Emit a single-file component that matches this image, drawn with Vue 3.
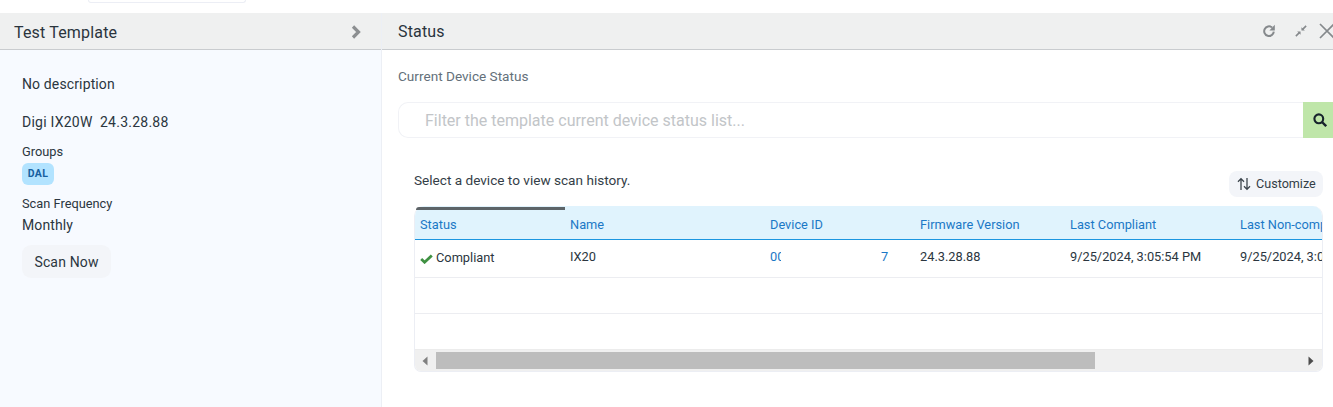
<script setup>
const columns = [
  { label: 'Status', width: 150 },
  { label: 'Name', width: 200 },
  { label: 'Device ID', width: 150 },
  { label: 'Firmware Version', width: 150 },
  { label: 'Last Compliant', width: 170 },
  { label: 'Last Non-compliant', width: 170 }
]
</script>

<template>
  <div class="page">
    <div class="topstrip"><div class="topinput"></div></div>
    <div class="panels">
      <aside class="left">
        <header class="head lefthead">
          <span class="title">Test Template</span>
          <svg class="chev" width="12" height="14" viewBox="0 0 12 14"><path d="M3 1.5 8.5 7 3 12.5" fill="none" stroke="#8c8f91" stroke-width="3.2"/></svg>
        </header>
        <div class="leftbody">
          <p class="line desc">No description</p>
          <p class="line model">Digi IX20W&nbsp; 24.3.28.88</p>
          <div class="small groups">Groups</div>
          <span class="badge">DAL</span>
          <div class="small freq">Scan Frequency</div>
          <div class="monthly">Monthly</div>
          <button class="scan">Scan Now</button>
        </div>
      </aside>
      <main class="right">
        <header class="head righthead">
          <span class="title">Status</span>
          <div class="tools">
            <svg class="refresh" width="14" height="14" viewBox="0 0 14 14"><path d="M11.8 7.6A4.8 4.8 0 1 1 10 3.4" fill="none" stroke="#85898c" stroke-width="2"/><path d="M12.8 .8v5.6H7.4z" fill="#85898c"/></svg>
            <svg class="shrink" width="12" height="12" viewBox="0 0 14 14"><path d="M13 1 8.6 5.4M1 13l4.4-4.4" stroke="#85898c" stroke-width="1.8"/><path d="M7.5 2.5v4h4zM2.5 7.5h4v4z" fill="#85898c"/></svg>
            <svg class="close" width="16" height="16" viewBox="0 0 16 16"><path d="M1 1 15 15M15 1 1 15" stroke="#85898c" stroke-width="1.7"/></svg>
          </div>
        </header>
        <div class="rightbody">
          <div class="section">Current Device Status</div>
          <div class="filter">
            <div class="filterbox">Filter the template current device status list...</div>
            <div class="searchbtn">
              <svg width="14" height="14" viewBox="0 0 14 14"><circle cx="5.8" cy="5.8" r="4.4" fill="none" stroke="#17232c" stroke-width="2.1"/><path d="m9 9 4.2 4.2" stroke="#17232c" stroke-width="2.4"/></svg>
            </div>
          </div>
          <div class="toolbar">
            <span class="hint">Select a device to view scan history.</span>
            <button class="customize">
              <svg width="14" height="14" viewBox="0 0 14 14"><path d="M4 13V2M1 4.8 4 1.6l3 3.2M10 1v11M7 9.2l3 3.2 3-3.2" fill="none" stroke="#3b444b" stroke-width="1.3"/></svg>
              <span class="customlabel">Customize</span>
            </button>
          </div>
          <div class="tablewrap">
            <div class="resizebar"></div>
            <div class="tableclip">
              <div class="row headrow">
                <div v-for="c in columns" :key="c.label" class="cell" :style="{ width: c.width + 'px' }">{{ c.label }}</div>
              </div>
              <div class="row datarow first">
                <div class="cell status" style="width:150px">
                  <svg width="13" height="10" viewBox="0 0 13 10"><path d="M1.2 5 4.6 8.2 11.8 1.4" fill="none" stroke="#3f9142" stroke-width="2.8"/></svg>
                  Compliant
                </div>
                <div class="cell" style="width:200px">IX20</div>
                <div class="cell link" style="width:150px">
                  <span class="clip">00</span><span class="tail">7</span>
                </div>
                <div class="cell" style="width:150px">24.3.28.88</div>
                <div class="cell" style="width:170px">9/25/2024, 3:05:54 PM</div>
                <div class="cell" style="width:170px">9/25/2024, 3:05:54 PM</div>
              </div>
              <div class="row datarow second"></div>
              <div class="scrollbar">
                <svg class="arrow aleft" width="6" height="10" viewBox="0 0 6 10"><path d="M5.5 .5v9L.5 5z" fill="#808080"/></svg>
                <div class="thumb"></div>
                <svg class="arrow aright" width="6" height="10" viewBox="0 0 6 10"><path d="M.5 .5v9L5.5 5z" fill="#4d4d4d"/></svg>
              </div>
            </div>
          </div>
        </div>
      </main>
    </div>
  </div>
</template>

<style>
html, body { margin: 0; background: #fff; }
</style>

<style scoped>
.page {
  width: 1333px;
  height: 407px;
  overflow: hidden;
  font-family: Roboto, "Liberation Sans", sans-serif;
  color: #2b3640;
  background: #fff;
}
.topstrip { height: 13px; padding-left: 88px; }
.topinput {
  width: 156px;
  height: 2px;
  border: 1px solid #eceef5;
  border-top: 0;
  border-radius: 0 0 6px 6px;
}
.panels { display: flex; height: 394px; }
.left {
  width: 381px;
  flex: none;
  background: #f7faff;
  border-right: 1px solid #eceff5;
}
.right { flex: 1; min-width: 0; }
.head {
  height: 36px;
  background: #eff0f0;
  border-bottom: 1px solid #c9cccf;
  display: flex;
  align-items: center;
}
.lefthead { padding: 2px 19px 0 14px; height: 34px; justify-content: space-between; }
.righthead { padding: 0 0 0 16px; justify-content: space-between; }
.title { font-size: 16px; letter-spacing: 0.17px; color: #2a343d; }
.tools { display: flex; align-items: center; }
.refresh { margin-top: -1px; margin-right: 1px; }
.shrink { margin-left: 18px; }
.close { margin-left: 12px; margin-right: -2px; }
.leftbody { padding: 26px 22px 0; }
.line { margin: 0; font-size: 14px; line-height: 17px; }
.desc { letter-spacing: 0.13px; }
.model { margin-top: 20px; letter-spacing: 0.24px; position: relative; top: 1px; }
.small { font-size: 12.8px; line-height: 14px; }
.groups { margin-top: 15px; }
.badge {
  display: block;
  width: 32px;
  height: 22px;
  margin-top: 4px;
  border-radius: 6px;
  background: #b2e3ff;
  color: #17609f;
  font-size: 10.5px;
  font-weight: 700;
  letter-spacing: 0.4px;
  line-height: 22px;
  text-align: center;
}
.freq { margin-top: 12px; }
.monthly { margin-top: 6px; font-size: 14px; line-height: 16px; letter-spacing: 0.1px; }
.scan {
  display: block;
  width: 89px;
  height: 33px;
  margin-top: 12px;
  padding: 0;
  border: 0;
  border-radius: 9px;
  background: #f3f5f9;
  color: #2b3640;
  font: 14px Roboto, sans-serif;
  letter-spacing: 0.15px;
}
.rightbody { padding: 18px 0 0 16px; }
.section { font-size: 13.6px; line-height: 17px; color: #64707a; }
.filter { display: flex; height: 36px; margin-top: 17px; }
.filterbox {
  flex: 1;
  box-sizing: border-box;
  padding-left: 26px;
  border: 1px solid #f1f2f6;
  border-right: 0;
  border-radius: 10px 0 0 10px;
  font-size: 16px;
  line-height: 35px;
  color: #c2c5c8;
}
.searchbtn {
  width: 30px;
  box-sizing: border-box;
  padding-left: 4px;
  background: #bfe6a9;
  display: flex;
  align-items: center;
  justify-content: center;
}
.toolbar {
  display: flex;
  justify-content: space-between;
  align-items: center;
  width: 909px;
  margin: 33px 0 0 16px;
  height: 26px;
}
.hint { font-size: 13.6px; color: #343e47; position: relative; top: -4px; }
.customize {
  display: flex;
  align-items: center;
  gap: 5px;
  width: 94px;
  height: 26px;
  padding: 0 0 0 8px;
  border: 0;
  border-radius: 8px;
  background: #f3f5f9;
  color: #343e47;
  font: 12.6px Roboto, sans-serif;
}
.customlabel { position: relative; top: -1px; }
.tablewrap {
  position: relative;
  width: 909px;
  margin: 9px 0 0 16px;
}
.resizebar {
  position: absolute;
  left: 2px;
  top: 1px;
  width: 149px;
  height: 3px;
  background: #5d6468;
  border-radius: 4px 0 0 0;
  z-index: 1;
}
.tableclip {
  box-sizing: border-box;
  height: 166px;
  overflow: hidden;
  border: 1px solid #eceef4;
  border-top: 0;
  border-radius: 10px 10px 7px 7px;
  font-size: 12.8px;
}
.row { display: flex; }
.cell { flex: none; box-sizing: border-box; padding-left: 5px; white-space: nowrap; overflow: hidden; }
.headrow {
  height: 34px;
  box-sizing: border-box;
  background: #e0f3fd;
  border-bottom: 1px solid #1b96e0;
  line-height: 37px;
  color: #1b78c6;
}
.datarow { border-bottom: 1px solid #ecedf1; }
.first { height: 37px; line-height: 34px; color: #2b3640; }
.second { height: 35px; }
.status { display: flex; align-items: center; gap: 3px; padding-bottom: 2px; }
.status svg { margin-top: 2px; }
.link { color: #1b78c6; display: flex; }
.clip { width: 11px; overflow: hidden; flex: none; }
.tail { margin-left: 100px; }
.scrollbar {
  position: relative;
  height: 22px;
  margin-top: 35px;
  background: #f0f0f0;
  border-top: 1px solid #ececec;
  box-sizing: border-box;
  padding-top: 2px;
}
.thumb { margin-left: 21px; width: 659px; height: 17px; background: #bdbdbd; }
.arrow { position: absolute; top: 6px; }
.aleft { left: 7px; }
.aright { right: 8px; }
</style>
